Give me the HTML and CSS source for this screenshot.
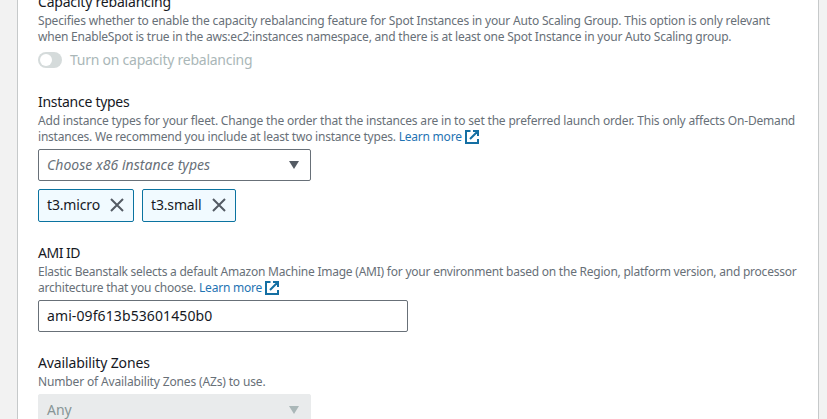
FILE: index.html
```html
<!DOCTYPE html>
<html lang="en">
<head>
<meta charset="utf-8">
<title>Capacity</title>
<link rel="stylesheet" href="styles.css">
</head>
<body>
<main class="panel">
  <section class="field field-rebalancing">
    <h2 class="label"><span class="l-rebalancing">Capacity rebalancing</span></h2>
    <p class="hint"><span class="h1">Specifies whether to enable the capacity rebalancing feature for Spot Instances in your Auto Scaling Group. This option is only relevant</span><br><span class="h2">when EnableSpot is true in the aws:ec2:instances namespace, and there is at least one Spot Instance in your Auto Scaling group.</span></p>
    <div class="toggle-row"><span class="toggle"></span><span class="toggle-text">Turn on capacity rebalancing</span></div>
  </section>
  <section class="field field-types">
    <h2 class="label"><span class="l-types">Instance types</span></h2>
    <p class="hint"><span class="h3">Add instance types for your fleet. Change the order that the instances are in to set the preferred launch order. This only affects On-Demand</span><br><span class="h4">instances. We recommend you include at least two instance types. <a>Learn more</a></span><svg class="ext" viewBox="0 0 14 14"><path d="M5.5 1H1v12h12V9M8 1h5v5M13 1 5 9"/></svg></p>
    <div class="control select"><span class="placeholder">Choose x86 instance types</span><svg class="caret" viewBox="0 0 10 8"><path d="M0 0h10L5 8z"/></svg></div>
    <div class="chips">
      <span class="chip chip-micro"><span class="chip-text">t3.micro</span><svg class="close" viewBox="0 0 14 14"><path d="M1 1l12 12M13 1 1 13"/></svg></span>
      <span class="chip chip-small"><span class="chip-text">t3.small</span><svg class="close" viewBox="0 0 14 14"><path d="M1 1l12 12M13 1 1 13"/></svg></span>
    </div>
  </section>
  <section class="field field-ami">
    <h2 class="label"><span class="l-ami">AMI ID</span></h2>
    <p class="hint"><span class="h5">Elastic Beanstalk selects a default Amazon Machine Image (AMI) for your environment based on the Region, platform version, and processor</span><br><span class="h6">architecture that you choose. <a>Learn more</a></span><svg class="ext" viewBox="0 0 14 14"><path d="M5.5 1H1v12h12V9M8 1h5v5M13 1 5 9"/></svg></p>
    <div class="control input"><span class="value">ami-09f613b53601450b0</span></div>
  </section>
  <section class="field field-zones">
    <h2 class="label"><span class="l-zones">Availability Zones</span></h2>
    <p class="hint"><span class="h7">Number of Availability Zones (AZs) to use.</span></p>
    <div class="control select disabled"><span class="any">Any</span><svg class="caret" viewBox="0 0 10 8"><path d="M0 0h10L5 8z"/></svg></div>
  </section>
</main>
</body>
</html>
```
FILE: styles.css
```css
* { box-sizing: border-box; }
html, body { height: 100%; }
body {
  margin: 0;
  overflow: hidden;
  background: #f2f2f2;
  color: #16191f;
  font-family: "Noto Sans", sans-serif;
  font-size: 14px;
}
.panel {
  width: 802px;
  height: 419px;
  margin-left: 17px;
  padding-left: 20px;
  overflow: hidden;
  background: #fff;
  border: solid #c6c9ca;
  border-width: 0 1px;
}
.field-rebalancing { height: 92px; margin-top: -9px; }
.field-types { height: 151px; padding-top: 8px; }
.field-ami { height: 110px; padding-top: 8px; }
.field-zones { padding-top: 8px; }
.label { margin: 0; height: 22px; font-size: 14px; font-weight: 400; line-height: 21px; white-space: nowrap; }
.field-rebalancing .label { line-height: 22px; }
.hint { margin: 0 0 4px; color: #687078; font-size: 12px; line-height: 16px; white-space: nowrap; }
.hint a { color: #1f74b3; }
.ext { width: 14px; height: 14px; margin-left: 3px; vertical-align: -3px; fill: none; stroke: #146fa3; stroke-width: 2; }
.toggle-row { display: flex; align-items: center; height: 22px; color: #aab7b8; }
.toggle { width: 24px; height: 16px; margin-right: 8px; padding: 2px; border-radius: 8px; background: #d5dbdb; }
.toggle::before { content: ""; display: block; width: 12px; height: 12px; border-radius: 50%; background: #fff; }
.toggle-text { padding-bottom: 1px; }
.placeholder, .chip-text, .value, .any { padding-bottom: 2px; }
.control { display: flex; align-items: center; height: 32px; padding: 0 8px; border: 1px solid #687078; border-radius: 2px; white-space: nowrap; }
.select { width: 273px; justify-content: space-between; padding-right: 11px; }
.input { width: 370px; }
.placeholder { color: #687078; font-style: italic; }
.caret { width: 10px; height: 8px; fill: #545b64; }
.disabled { background: #e9ebec; border-color: #e9ebec; color: #879596; }
.disabled .caret { fill: #aab7b8; }
.chips { display: flex; gap: 8px; margin-top: 8px; }
.chip { display: flex; align-items: center; justify-content: space-between; height: 33px; padding: 0 9px 0 8px; border: 1px solid #0b73a0; border-radius: 2px; background: #f1faff; }
.chip-micro { width: 96px; }
.chip-small { width: 94px; }
.close { width: 14px; height: 14px; margin-bottom: 1px; fill: none; stroke: #545b64; stroke-width: 2; }

/* Per-line tracking */
.l-rebalancing { letter-spacing: -0.2px; }
.l-types { letter-spacing: -0.28px; }
.l-ami { letter-spacing: -0.5px; }
.l-zones { letter-spacing: -0.12px; }
.toggle-text { letter-spacing: -0.25px; }
.placeholder { letter-spacing: 0.03px; }
.chip-text { letter-spacing: -0.15px; }
.value { letter-spacing: 0.1px; }
.h1 { letter-spacing: -0.178px; }
.h2 { letter-spacing: -0.215px; }
.h3 { letter-spacing: -0.18px; }
.h4 { letter-spacing: -0.22px; }
.h5 { letter-spacing: -0.23px; }
.h6 { letter-spacing: -0.21px; }
.h7 { letter-spacing: -0.15px; }
```
